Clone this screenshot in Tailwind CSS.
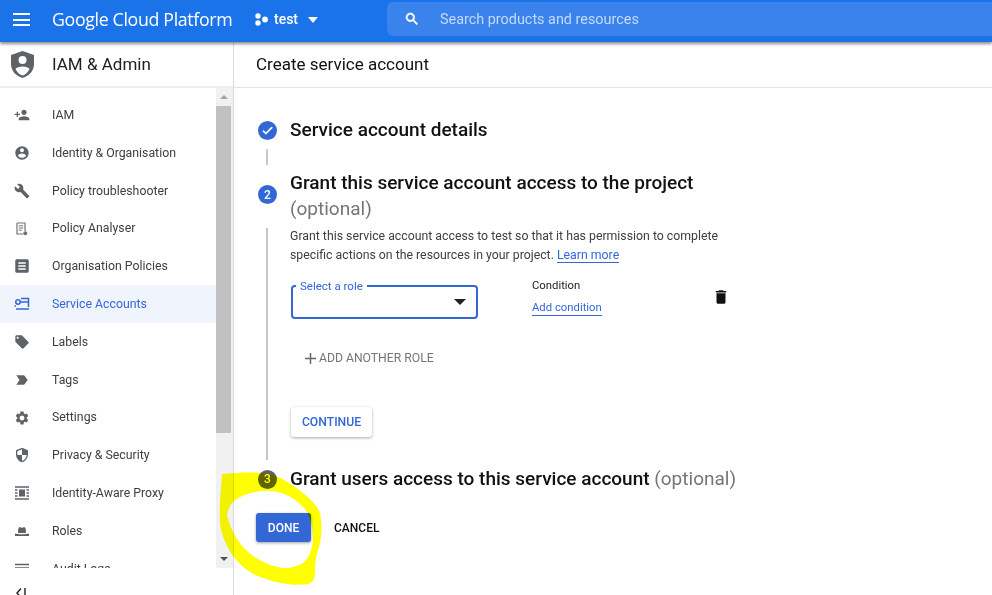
<!doctype html>
<html><head><meta charset="utf-8"><script src="https://cdn.jsdelivr.net/npm/@tailwindcss/browser@4"></script></head>
<body class="m-0 overflow-hidden bg-white">
<div class="relative w-[992px] h-[595px] overflow-hidden flex flex-col font-['Roboto',sans-serif] text-[#202124]">
  <header class="relative z-10 h-[42px] shrink-0 bg-[#1a73e8] shadow-[0_2px_3px_rgba(0,0,0,0.45)] flex items-start text-white">
    <div class="w-[52px] h-[39px] flex items-center pl-[13px]">
      <div class="w-[17px] flex flex-col gap-[3.5px]"><span class="block h-[2px] bg-white"></span><span class="block h-[2px] bg-white"></span><span class="block h-[2px] bg-white"></span></div>
    </div>
    <div class="w-[203px] h-[38px] flex items-center font-['Open_Sans',sans-serif] text-[17.8px] tracking-[-0.35px] whitespace-nowrap">Google Cloud Platform</div>
    <div class="w-[132px] h-[39px] flex items-center">
      <svg class="w-[13px] h-[13px]" viewBox="0 0 13 13" fill="#fff"><circle cx="3" cy="3" r="2.7"/><circle cx="3" cy="10" r="2.7"/><circle cx="10" cy="6.5" r="2.9"/></svg>
      <span class="ml-[6px] text-[14px] font-medium">test</span>
      <span class="ml-[10px] w-0 h-0 border-x-[5.5px] border-x-transparent border-t-[6px] border-t-white"></span>
    </div>
    <div class="flex-1 mt-[2px] h-[34px] rounded-l-[6px] bg-[#3b83ec] flex items-center pl-[17px]">
      <svg class="w-[16px] h-[16px]" viewBox="0 0 24 24" fill="#fff"><path d="M15.5 14h-.79l-.28-.27C15.41 12.59 16 11.11 16 9.5 16 5.91 13.09 3 9.5 3S3 5.91 3 9.5 5.91 16 9.5 16c1.61 0 3.09-.59 4.23-1.57l.27.28v.79l5 4.99L20.49 19l-4.99-5zm-6 0C7.01 14 5 11.99 5 9.5S7.01 5 9.5 5 14 7.01 14 9.5 11.99 14 9.5 14z" stroke="#fff" stroke-width="1"/></svg>
      <span class="ml-[20px] mt-[1px] text-[14.4px] text-[#c4dafb]">Search products and resources</span>
    </div>
  </header>
  <div class="flex flex-1 min-h-0">
    <aside class="w-[234px] shrink-0 border-r border-[#dadce0] flex flex-col">
      <div class="h-[46px] shrink-0 border-b-2 border-[#eeeeee] flex items-center">
        <svg class="ml-[10px] w-[25px] h-[29px]" viewBox="0 0 25 29"><path d="M12.5 1 L24 5 V14 C24 21 19 26 12.5 28 C6 26 1 21 1 14 V5 Z" fill="#5f6368"/><circle cx="12.5" cy="10" r="4" fill="#fff"/><path d="M5.5 19 C7 15.5 18 15.5 19.5 19 C17.5 23 15 24.5 12.5 25.5 C10 24.5 7.5 23 5.5 19Z" fill="#fff"/></svg>
        <span class="ml-[17px] mt-[2px] text-[17px] text-[#202124]">IAM &amp; Admin</span>
      </div>
      <div class="flex h-[480px] shrink-0">
        <nav class="w-[216px] h-full overflow-hidden pt-[8.4px] text-[12.3px] text-[#3c4043]">
          <a class="flex items-center h-[37.8px]"><svg class="ml-[14px] w-[16px] h-[16px] fill-[#5f6368]" viewBox="0 0 24 24"><path d="M15 12c2.21 0 4-1.79 4-4s-1.79-4-4-4-4 1.79-4 4 1.79 4 4 4zm-9-2V7H4v3H1v2h3v3h2v-3h3v-2H6zm9 4c-2.67 0-8 1.34-8 4v2h16v-2c0-2.66-5.33-4-8-4z"/></svg><span class="ml-[22px]">IAM</span></a>
          <a class="flex items-center h-[37.8px]"><svg class="ml-[14px] w-[16px] h-[16px] fill-[#5f6368]" viewBox="0 0 24 24"><path d="M12 2C6.48 2 2 6.48 2 12s4.48 10 10 10 10-4.48 10-10S17.52 2 12 2zm0 3c1.66 0 3 1.34 3 3s-1.34 3-3 3-3-1.34-3-3 1.34-3 3-3zm0 14.2c-2.5 0-4.71-1.28-6-3.22.03-1.99 4-3.08 6-3.08 1.99 0 5.97 1.09 6 3.08-1.29 1.94-3.5 3.22-6 3.22z"/></svg><span class="ml-[22px]">Identity &amp; Organisation</span></a>
          <a class="flex items-center h-[37.8px]"><svg class="ml-[14px] w-[16px] h-[16px] fill-[#5f6368]" viewBox="0 0 24 24"><path d="M22.7 19l-9.1-9.1c.9-2.3.4-5-1.5-6.9-2-2-5-2.4-7.4-1.3L9 6 6 9 1.6 4.7C.4 7.1.9 10.1 2.9 12.1c1.9 1.9 4.6 2.4 6.9 1.5l9.1 9.1c.4.4 1 .4 1.4 0l2.3-2.3c.5-.4.5-1.1.1-1.4z"/></svg><span class="ml-[22px]">Policy troubleshooter</span></a>
          <a class="flex items-center h-[37.8px]"><svg class="ml-[13px] w-[18px] h-[18px]" viewBox="0 0 18 18"><path d="M4 3h8v8M4 3v11h6" fill="none" stroke="#6f7377" stroke-width="1.2"/><path d="M5.8 5.8h4.4M5.8 8h4.4M5.8 10.2h3" stroke="#6f7377" stroke-width="1"/><circle cx="12.3" cy="13.2" r="2" fill="#6f7377"/></svg><span class="ml-[21px]">Policy Analyser</span></a>
          <a class="flex items-center h-[37.8px]"><svg class="ml-[13px] w-[18px] h-[18px] fill-[#5f6368]" viewBox="0 0 24 24"><path d="M19 3H5c-1.1 0-2 .9-2 2v14c0 1.1.9 2 2 2h14c1.1 0 2-.9 2-2V5c0-1.1-.9-2-2-2zm-2 14H7v-2h10v2zm0-4H7v-2h10v2zm0-4H7V7h10v2z"/></svg><span class="ml-[21px]">Organisation Policies</span></a>
          <a class="flex items-center h-[37.8px] bg-[#f0f4fd] text-[#3367d6]"><svg class="ml-[13px] w-[18px] h-[18px]" viewBox="0 0 18 18" fill="none" stroke="#3367d6" stroke-width="1.5"><circle cx="5" cy="7" r="2.2"/><path d="M7 7h9M8 3.5h7.5V12M3 14h13" /><path d="M1.5 11h1.5"/></svg><span class="ml-[21px]">Service Accounts</span></a>
          <a class="flex items-center h-[37.8px]"><svg class="ml-[14px] w-[16px] h-[16px] fill-[#5f6368]" viewBox="0 0 24 24"><path d="M21.41 11.58l-9-9C12.05 2.22 11.55 2 11 2H4c-1.1 0-2 .9-2 2v7c0 .55.22 1.05.59 1.42l9 9c.36.36.86.58 1.41.58.55 0 1.05-.22 1.41-.59l7-7c.37-.36.59-.86.59-1.41 0-.55-.23-1.06-.59-1.42zM5.5 7C4.67 7 4 6.33 4 5.5S4.67 4 5.5 4 7 4.67 7 5.5 6.33 7 5.5 7z"/></svg><span class="ml-[22px]">Labels</span></a>
          <a class="flex items-center h-[37.8px]"><svg class="ml-[14px] w-[16px] h-[16px] fill-[#5f6368]" viewBox="0 0 24 24"><path d="M3.5 18.99l11 .01c.67 0 1.27-.33 1.63-.84L20.5 12l-4.37-6.16c-.36-.51-.96-.84-1.63-.84l-11 .01L8.34 12 3.5 18.99z"/></svg><span class="ml-[22px]">Tags</span></a>
          <a class="flex items-center h-[37.8px]"><svg class="ml-[14px] w-[16px] h-[16px] fill-[#5f6368]" viewBox="0 0 24 24"><path d="M19.14 12.94c.04-.3.06-.61.06-.94 0-.32-.02-.64-.07-.94l2.03-1.58c.18-.14.23-.41.12-.61l-1.92-3.32c-.12-.22-.37-.29-.59-.22l-2.39.96c-.5-.38-1.03-.7-1.62-.94l-.36-2.54c-.04-.24-.24-.41-.48-.41h-3.84c-.24 0-.43.17-.47.41l-.36 2.54c-.59.24-1.13.57-1.62.94l-2.39-.96c-.22-.08-.47 0-.59.22L2.74 8.87c-.12.21-.08.47.12.61l2.03 1.58c-.05.3-.09.63-.09.94s.02.64.07.94l-2.03 1.58c-.18.14-.23.41-.12.61l1.92 3.32c.12.22.37.29.59.22l2.39-.96c.5.38 1.03.7 1.62.94l.36 2.54c.05.24.24.41.48.41h3.84c.24 0 .44-.17.47-.41l.36-2.54c.59-.24 1.13-.56 1.62-.94l2.39.96c.22.08.47 0 .59-.22l1.92-3.32c.12-.22.07-.47-.12-.61l-2.01-1.58zM12 15.6c-1.98 0-3.6-1.62-3.6-3.6s1.62-3.6 3.6-3.6 3.6 1.62 3.6 3.6-1.62 3.6-3.6 3.6z"/></svg><span class="ml-[22px]">Settings</span></a>
          <a class="flex items-center h-[37.8px]"><svg class="ml-[14px] w-[16px] h-[16px] fill-[#5f6368]" viewBox="0 0 24 24"><path d="M12 1L3 5v6c0 5.55 3.84 10.74 9 12 5.16-1.26 9-6.45 9-12V5l-9-4zm0 10.99h7c-.53 4.12-3.28 7.79-7 8.94V12H5V6.3l7-3.11v8.8z"/></svg><span class="ml-[22px]">Privacy &amp; Security</span></a>
          <a class="flex items-center h-[37.8px]"><svg class="ml-[13px] w-[18px] h-[18px]" viewBox="0 0 18 18"><path d="M2 3h14M2 15h14" stroke="#5f6368" stroke-width="1.5"/><path d="M2 6h2.5M2 9h2.5M2 12h2.5M13.5 6H16M13.5 9H16M13.5 12H16" stroke="#5f6368" stroke-width="1.3"/><rect x="6" y="5.5" width="6" height="7" fill="#5f6368"/></svg><span class="ml-[21px]">Identity-Aware Proxy</span></a>
          <a class="flex items-center h-[37.8px]"><svg class="ml-[13px] w-[18px] h-[18px]" viewBox="0 0 18 18" fill="#5f6368"><path d="M5 11 C5 7 5.5 5 7 5 C8 5 8 6 9 6 C10 6 10 5 11 5 C12.5 5 13 7 13 11Z"/><path d="M2 11.5 C4 12.5 14 12.5 16 11.5 V14 H2Z"/></svg><span class="ml-[21px]">Roles</span></a>
          <a class="flex items-center h-[37.8px]"><svg class="ml-[13px] w-[18px] h-[18px]" viewBox="0 0 18 18"><path d="M2 4.5h14M2 8h14M2 11.5h14" stroke="#5f6368" stroke-width="1.5"/></svg><span class="ml-[21px]">Audit Logs</span></a>
        </nav>
        <div class="w-[17px] h-full bg-[#f1f1f1] flex flex-col items-start">
          <div class="h-[18px] w-[15px] flex items-center justify-center"><span class="w-0 h-0 border-x-[4px] border-x-transparent border-b-[4px] border-b-[#a3a3a3]"></span></div>
          <div class="w-[15px] h-[327px] bg-[#c1c1c1]"></div>
          <div class="mt-auto h-[18px] w-[15px] flex items-center justify-center"><span class="w-0 h-0 border-x-[4px] border-x-transparent border-t-[4px] border-t-[#505050]"></span></div>
        </div>
      </div>
      <div class="flex-1 flex items-end pl-[15px] text-[#3c4043]">
        <svg class="w-[12px] h-[12px] -mb-[4px]" viewBox="0 0 12 12" fill="none" stroke="#202124" stroke-width="1.4"><path d="M6 1.5 2 6l4 4.5M10 1v10"/></svg>
      </div>
    </aside>
    <main class="flex-1 min-w-0 flex flex-col">
      <div class="h-[46px] shrink-0 border-b border-[#e3e3e3] flex items-center pl-[22px] text-[17px] text-[#111]">Create service account</div>
      <div class="pl-[24px] pt-[29px] flex flex-col w-[540px]">
        <div class="flex items-center h-[26px]">
          <span class="mt-[0px] w-[19px] h-[19px] rounded-full bg-[#3367d6] flex items-center justify-center"><svg class="w-[13px] h-[13px]" viewBox="0 0 24 24" fill="#fff"><path d="M9 16.17 4.83 12l-1.42 1.41L9 19 21 7l-1.41-1.41z" stroke="#fff" stroke-width="1.5"/></svg></span>
          <span class="ml-[13px] text-[19px] font-medium text-[#111]">Service account details</span>
        </div>
        <div class="ml-[8px] mt-[6px] h-[16px] w-[2px] bg-[#c8c8c8]"></div>
        <div class="flex mt-[5px]">
          <div class="w-[19px] pt-[15px]"><span class="flex w-[19px] h-[19px] rounded-full bg-[#3367d6] text-white text-[12px] font-medium items-center justify-center">2</span></div>
          <div class="ml-[13px] text-[19px] leading-[26px] font-medium text-[#111]">Grant this service account access to the project<br><span class="font-normal text-[#757575]">(optional)</span></div>
        </div>
        <div class="flex mt-[6px]">
          <div class="ml-[8px] w-[2px] h-[232px] bg-[#c8c8c8]"></div>
          <div class="ml-[22px] flex-1">
            <p class="-mt-[1px] w-[432px] text-[12.3px] leading-[18.5px] text-[#3c4043]">Grant this service account access to test so that it has permission to complete specific actions on the resources in your project. <a class="text-[#3367d6] border-b border-[#3367d6]">Learn more</a></p>
            <div class="flex mt-[21px] h-[44px]">
              <div class="relative w-[187px] h-[34px] ml-px border-2 border-[#3367d6] rounded-[4px] flex items-center justify-end pr-[10px]">
                <span class="absolute -top-[8px] left-[3px] bg-white px-[4px] text-[11.5px] leading-[14px] text-[#3367d6]">Select a role</span>
                <span class="w-0 h-0 border-x-[6px] border-x-transparent border-t-[6px] border-t-[#202124]"></span>
              </div>
              <div class="ml-[54px] w-[150px] text-[11.3px] text-[#202124] -mt-[6px]">
                <div class="leading-[14px]">Condition</div>
                <a class="inline-block mt-[8px] leading-[14px] text-[#3367d6] border-b border-[#3367d6]">Add condition</a>
              </div>
              <svg class="ml-[30px] mt-[3px] w-[18px] h-[18px] fill-[#111]" viewBox="0 0 24 24"><path d="M6 19c0 1.1.9 2 2 2h8c1.1 0 2-.9 2-2V7H6v12zM19 4h-3.5l-1-1h-5l-1 1H5v2h14V4z"/></svg>
            </div>
            <div class="flex items-center h-[16px] mt-[21px] ml-[14px] text-[12.2px] font-normal text-[#757575]">
              <svg class="w-[13px] h-[13px]" viewBox="0 0 13 13" stroke="#666" stroke-width="1.5"><path d="M6.5 1v11M1 6.5h11"/></svg>
              <span class="ml-[2px]">ADD ANOTHER ROLE</span>
            </div>
            <button class="block mt-[41px] ml-px w-[81px] h-[30px] bg-white rounded-[3px] shadow-[0_1px_3px_rgba(60,64,67,0.45)] text-[12.2px] font-medium text-[#3367d6]">CONTINUE</button>
          </div>
        </div>
        <div class="flex items-center h-[20px] mt-[9px] whitespace-nowrap">
          <span class="flex w-[19px] h-[19px] rounded-full bg-[#5f6368] text-white text-[12px] font-medium items-center justify-center">3</span>
          <span class="ml-[13px] text-[19px] font-medium text-[#111]">Grant users access to this service account <span class="font-normal text-[#757575]">(optional)</span></span>
        </div>
        <div class="flex items-center mt-[24px] -ml-[2px]">
          <button class="w-[55px] h-[29px] rounded-[3px] bg-[#3367d6] shadow-[0_1px_3px_rgba(60,64,67,0.5)] text-white text-[12px] font-medium">DONE</button>
          <span class="ml-[23px] text-[12px] font-medium text-[#111]">CANCEL</span>
        </div>
      </div>
    </main>
  </div>
  <svg class="absolute left-0 top-0 pointer-events-none mix-blend-multiply" width="992" height="595" viewBox="0 0 992 595"><path fill="#ffff00" fill-rule="evenodd" d="M222 474 C235 473 250 472 262 473 C275 474 285 480 295 487 C305 494 316 503 320 513 C322 525 322 535 319 547 C316 555 315 565 315 572 C315 580 312 583 308 584 C295 586 280 584 263 578 C250 574 240 565 233 556 C226 545 221 535 220 522 C219 505 221 490 222 474 Z M227 515 C228 508 232 501 240 497 C250 492 262 490 272 491 C285 492 297 500 305 509 C311 516 313 530 313 542 C311 552 308 560 303 563 C295 568 285 569 277 567 C265 564 255 558 248 552 C240 545 230 530 227 515 Z"/></svg>
</div>
</body></html>
